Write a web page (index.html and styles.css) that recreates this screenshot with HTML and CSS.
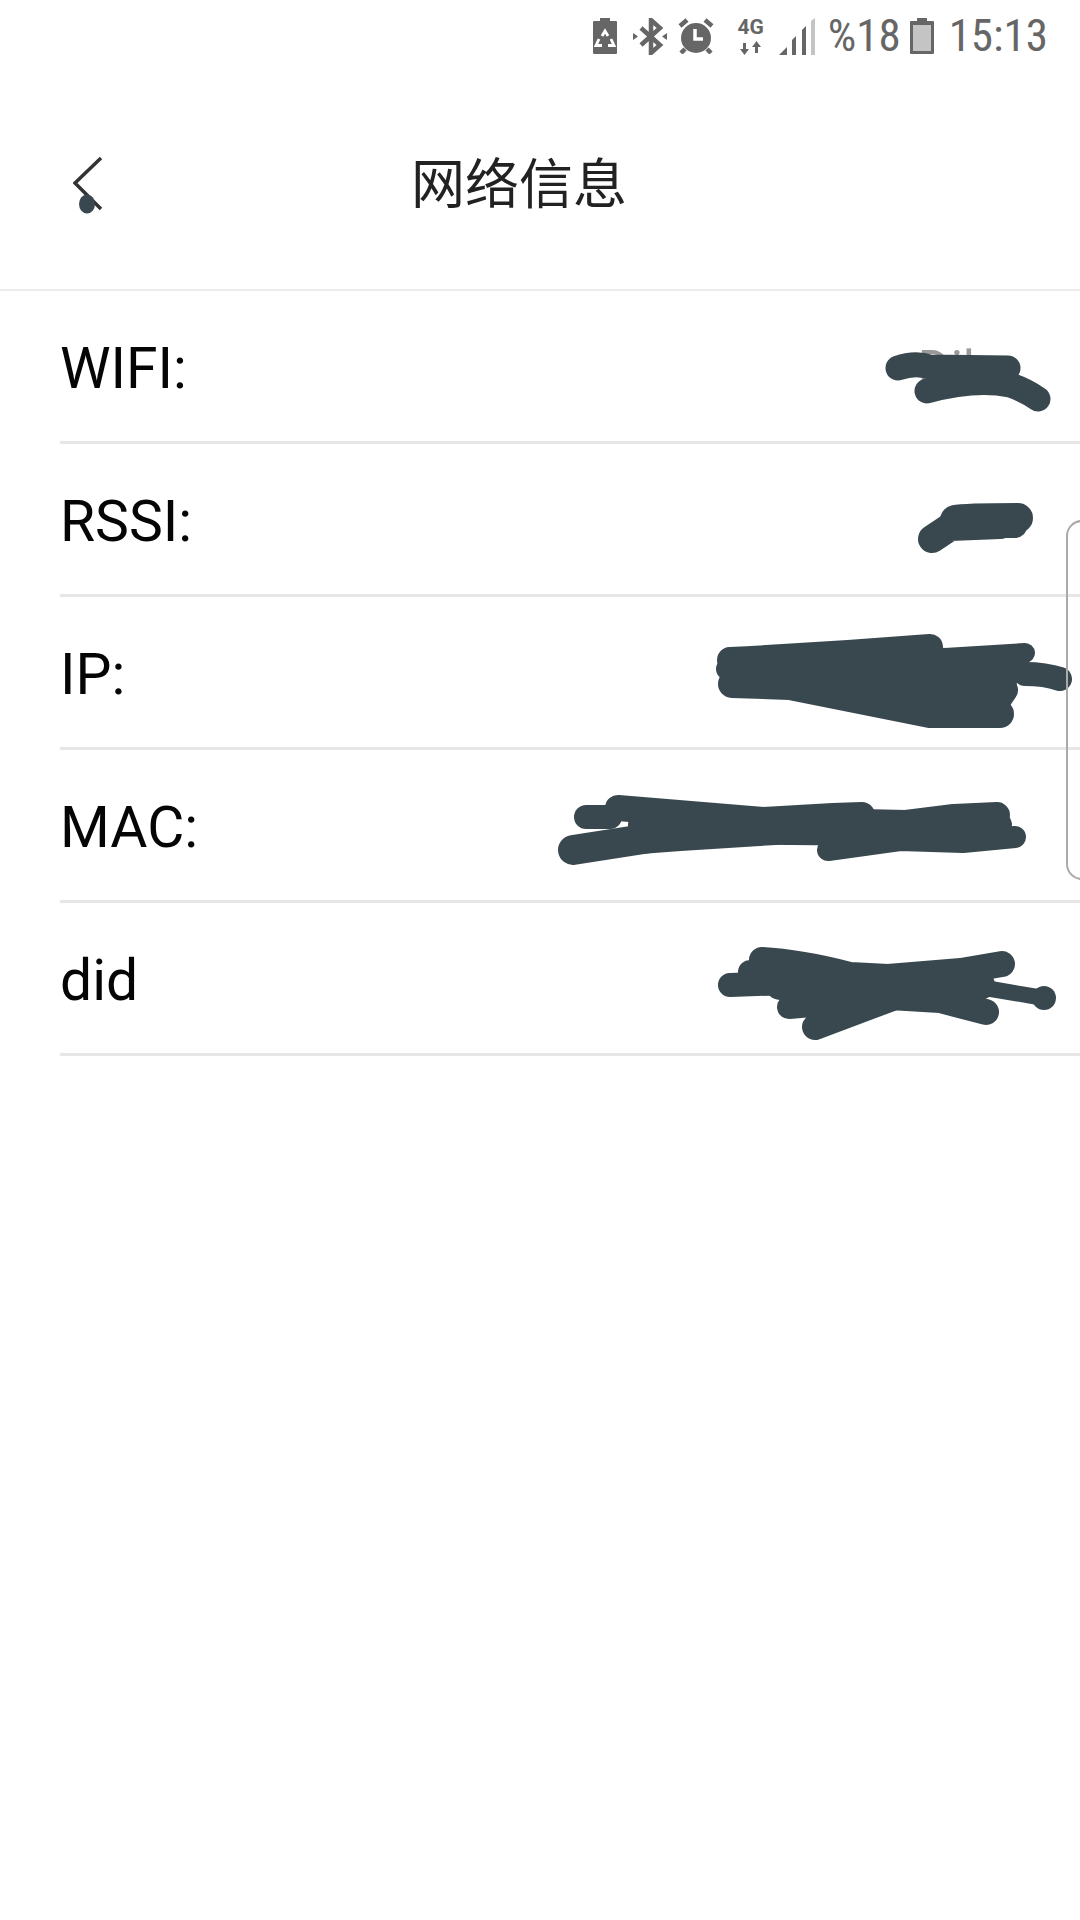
FILE: index.html
```html
<!DOCTYPE html>
<html lang="zh-CN">
<head>
  <meta charset="UTF-8">
  <title>网络信息</title>
  <link rel="stylesheet" href="styles.css">
</head>
<body>
  <div class="page">
    <!-- Status bar -->
    <div class="status-bar">
      <svg class="icon-saver" width="24" height="36" viewBox="0 0 24 36">
        <path class="ink" d="M1 3h6V0h10v3h6a1 1 0 0 1 1 1v31a1 1 0 0 1-1 1H1a1 1 0 0 1-1-1V4a1 1 0 0 1 1-1z"/>
        <path class="cut thin" d="M9 18l3-5 3 5M18 21l3 6.500h-6M9 27.500H3l3-6.500"/>
      </svg>
      <svg class="icon-bt" width="34" height="37" viewBox="0 0 34 37">
        <path class="line" d="M8 10l19 17-9 8V2l9 8-19 17"/>
        <path class="ink" d="M0 15l5 3.500-5 3.500zM34 15l-5 3.500 5 3.500z"/>
      </svg>
      <svg class="icon-alarm" width="36" height="36" viewBox="0 0 36 36">
        <circle class="ink" cx="18" cy="20" r="15"/>
        <path class="line" d="M2 8l7-6M34 8l-7-6M7 31l-4 4M29 31l4 4"/>
        <path class="cut" d="M17 11v10h8"/>
      </svg>
      <div class="net">
        <span class="net-label">4G</span>
        <svg width="24" height="14" viewBox="0 0 24 14">
          <path class="ink" d="M4 2h3v6h3l-4.500 6L1 8h3zM16 12h3V6h3l-4.500-6L13 6h3z"/>
        </svg>
      </div>
      <svg class="icon-signal" width="36" height="37" viewBox="0 0 36 37">
        <path class="ink" d="M0 37l8-8v8zM13 37V22l4-4v19zM23 37V12l4-4v29z"/>
        <path class="dim" d="M32 37V3l4-3v37z"/>
      </svg>
      <span class="status-text level">%18</span>
      <svg class="icon-battery" width="24" height="36" viewBox="0 0 24 36">
        <path class="ink" d="M1 3h6V0h10v3h6a1 1 0 0 1 1 1v31a1 1 0 0 1-1 1H1a1 1 0 0 1-1-1V4a1 1 0 0 1 1-1z"/>
        <rect class="dim" x="3" y="7" width="18" height="26"/>
      </svg>
      <span class="status-text time">15:13</span>
    </div>

    <!-- Header -->
    <div class="header">
      <svg class="back" width="30" height="54" viewBox="0 0 30 54">
        <path d="M28 1L2 26l26 26"/>
      </svg>
      <h1 class="title">网络信息</h1>
    </div>

    <!-- Info rows -->
    <div class="info-list">
      <div class="info-row">
        <span class="info-label">WIFI:</span>
        <span class="info-value">Dil</span>
      </div>
      <div class="info-row">
        <span class="info-label">RSSI:</span>
      </div>
      <div class="info-row">
        <span class="info-label">IP:</span>
      </div>
      <div class="info-row">
        <span class="info-label">MAC:</span>
      </div>
      <div class="info-row">
        <span class="info-label">did</span>
      </div>
    </div>

    <!-- Marker scribbles drawn on top of the screenshot -->
    <svg class="scribbles" width="1080" height="1920" viewBox="0 0 1080 1920">
      <ellipse class="dot" cx="87" cy="204" rx="8" ry="9.500"/>

      <!-- WIFI -->
      <g stroke-width="25">
        <path d="M898 368Q915 362 930 367L1008 368"/>
        <path d="M927 391Q975 378 1010 385Q1025 390 1038 399"/>
      </g>

      <!-- RSSI -->
      <path stroke-width="28" d="M932 539L950 527L1000 525"/>
      <path stroke-width="30" d="M955 520Q965 518 1018 518"/>
      <path stroke-width="24" d="M950 526L1015 526"/>

      <!-- IP -->
      <polygon class="mass" points="730,660 930,647 1025,653 1015,690 1000,715 930,715 790,685 730,685"/>
      <path stroke-width="26" d="M730 660Q830 655 930 647"/>
      <path stroke-width="28" d="M732 684L790 686L930 714L1000 714"/>
      <path stroke-width="20" d="M945 658L1025 653"/>
      <path stroke-width="24" d="M1025 674Q1045 674 1060 679"/>
      <path stroke-width="22" d="M727 669L760 669"/>
      <path stroke-width="26" d="M1005 690L990 712"/>

      <!-- MAC -->
      <path stroke-width="24" d="M586 817L610 817"/>
      <path stroke-width="26" d="M618 808L764 820L833 816L862 815"/>
      <path stroke-width="24" d="M640 842L680 839L775 833"/>
      <path stroke-width="30" d="M573 850L650 838"/>
      <path stroke-width="22" d="M828 850L900 840L963 842L1015 837"/>
      <path stroke-width="26" d="M862 822L906 823L954 817L997 815"/>
      <path stroke-width="24" d="M640 825L780 826"/>
      <path stroke-width="28" d="M680 830L900 832"/>
      <path stroke-width="24" d="M850 825L1000 825"/>

      <!-- did -->
      <path stroke-width="24" d="M730 985L790 983"/>
      <path stroke-width="24" d="M750 972L800 975"/>
      <path stroke-width="26" d="M762 960Q800 962 850 975L888 977L961 971L1002 964"/>
      <path stroke-width="16" d="M985 988L1044 998"/>
      <path stroke-width="24" d="M1044 998h0"/>
      <path stroke-width="26" d="M815 1027L895 997"/>
      <path stroke-width="24" d="M789 1007L870 1000"/>
      <path stroke-width="26" d="M986 1012L940 1000L890 997"/>
      <path stroke-width="30" d="M780 985L980 985"/>
    </svg>

    <!-- Edge panel handle -->
    <div class="edge-handle"></div>
  </div>
</body>
</html>
```

FILE: styles.css
```css
body {
  margin: 0;
  background-color: #ffffff;
  font-family: 'Roboto', 'Noto Sans CJK SC', sans-serif;
}

.page {
  position: relative;
  width: 1080px;
  height: 1920px;
  overflow: hidden;
}

/* status bar */
.status-bar {
  display: flex;
  align-items: center;
  justify-content: flex-end;
  gap: 15px;
  height: 72px;
  padding-right: 32px;
  color: #666666;
}

.status-bar .ink { fill: #666666; }
.status-bar .dim { fill: #c4c4c4; }
.status-bar .line {
  fill: none;
  stroke: #666666;
  stroke-width: 4.500;
}
.status-bar .cut {
  fill: none;
  stroke: #ffffff;
  stroke-width: 3.500;
}
.status-bar .cut.thin { stroke-width: 2.800; }

.icon-bt { margin-left: 1px; }
.icon-alarm { margin-left: -4px; }

.net {
  display: flex;
  flex-direction: column;
  align-items: center;
  width: 28px;
  margin-left: 8px;
}
.net-label {
  font-size: 21px;
  font-weight: bold;
  line-height: 19px;
}
.net svg { margin-top: 4px; }

.icon-signal { margin-left: -1px; }
.icon-battery { margin-left: -6px; }

.status-text {
  font-size: 45px;
  font-stretch: 85%;
  line-height: 44px;
  white-space: nowrap;
}
.status-text.level { margin-left: -2px; }

/* header */
.header {
  display: flex;
  align-items: center;
  height: 76px;
  padding: 74px 0 67px 73px;
  border-bottom: 2px solid #ececec;
}

.back path {
  fill: none;
  stroke: #333333;
  stroke-width: 3.500;
}

.title {
  margin: 0 0 8px 308px;
  font-family: 'Noto Sans CJK SC', sans-serif;
  font-size: 54px;
  font-weight: 400;
  color: #222222;
}

/* rows */
.info-list {
  margin-left: 60px;
}

.info-row {
  display: flex;
  align-items: center;
  justify-content: space-between;
  box-sizing: border-box;
  height: 153px;
  padding: 5px 105px 0 0;
  border-bottom: 3px solid #e6e6e6;
}

.info-label {
  font-size: 57px;
  color: #050505;
}

.info-value {
  font-size: 50px;
  color: #999999;
}

/* overlays */
.scribbles {
  position: absolute;
  top: 0;
  left: 0;
}
.scribbles path {
  fill: none;
  stroke: #39484f;
  stroke-linecap: round;
  stroke-linejoin: round;
}
.scribbles .mass,
.scribbles .dot {
  fill: #39484f;
}

.edge-handle {
  position: absolute;
  top: 520px;
  left: 1066px;
  width: 30px;
  height: 356px;
  border: 2px solid #aaaaaa;
  border-radius: 16px;
}
```
